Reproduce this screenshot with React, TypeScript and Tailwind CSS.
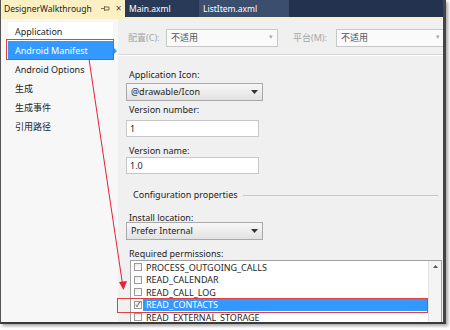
import React from 'react';

const FONT = '"Noto Sans", "Noto Sans CJK SC", sans-serif';

const NAV_ITEMS = ['Application', 'Android Manifest', 'Android Options', '生成', '生成事件', '引用路径'];

const PERMISSIONS = [
  { name: 'PROCESS_OUTGOING_CALLS', checked: false },
  { name: 'READ_CALENDAR', checked: false },
  { name: 'READ_CALL_LOG', checked: false },
  { name: 'READ_CONTACTS', checked: true },
  { name: 'READ_EXTERNAL_STORAGE', checked: false },
];

function Caret() {
  return (
    <svg width="7" height="4" viewBox="0 0 7 4" className="shrink-0">
      <path d="M0 0h7L3.5 4z" fill="#333" />
    </svg>
  );
}

function Select({ value, disabled, className }: { value: string; disabled?: boolean; className?: string }) {
  return (
    <div
      className={`flex items-center justify-between h-[18px] px-[4px] border ${
        disabled ? 'border-[#c8c8c8] bg-[#fafafa] text-[#555]' : 'border-[#a9a9a9] bg-[linear-gradient(#f7f7f7,#e2e2e2)] text-[#1e1e1e]'
      } ${className ?? ''}`}
    >
      <span>{value}</span>
      {disabled ? <span className="text-[#aaa] text-[7px]">▾</span> : <Caret />}
    </div>
  );
}

function TextInput({ value }: { value: string }) {
  return (
    <div className="flex items-center h-[17px] w-[133px] px-[3px] bg-white border border-[#c7c7c7] text-[#1e1e1e]">
      {value}
    </div>
  );
}

function Label({ children, className }: { children: React.ReactNode; className?: string }) {
  return <div className={`pl-[3px] text-[#1e1e1e] leading-[12px] h-[12px] ${className ?? ''}`}>{children}</div>;
}

export default function App() {
  return (
    <div className="relative w-[450px] h-[330px] bg-white overflow-hidden text-[9px]" style={{ fontFamily: FONT }}>
      <div className="flex flex-col w-[446px] h-[324px] bg-[#f0f0f0] border-l border-l-[#555] border-r-[3px] border-r-[#444] border-b-[2px] border-b-[#3a3a3a] shadow-[2px_2px_3px_rgba(0,0,0,0.35)] overflow-hidden">
        {/* document tabs */}
        <div className="flex h-[17px] bg-[#293a58] text-[8.5px] leading-[17px] shrink-0">
          <div className="flex items-center w-[124px] pl-[3px] bg-[#fbf0c3] text-[#1e1e1e]">
            <span>DesignerWalkthrough</span>
            <svg width="9" height="7" viewBox="0 0 9 7" className="ml-[9px]">
              <path d="M0 3.5h3M3.5 1v5M3.5 2h4.5v3h-4.5" stroke="#76704f" strokeWidth="1" fill="none" />
            </svg>
            <span className="ml-[6px] text-[#444] text-[10px]">×</span>
          </div>
          <div className="w-[74px] pl-[4px] text-white">Main.axml</div>
          <div className="w-[90px] pl-[4px] bg-[#3b4e6e] text-white">ListItem.axml</div>
          <div className="flex-1 bg-[#22324f]" />
        </div>
        <div className="h-[2px] bg-[#fbf0c3] shrink-0" />

        <div className="flex flex-1 min-h-0">
          {/* sidebar */}
          <div className="w-[117px] shrink-0 bg-[#f7f7f7] pt-[3px] flex flex-col text-[#1e1e1e] text-[9px]">
            {NAV_ITEMS.map((item, i) => (
              <div
                key={item}
                className={`relative flex items-center h-[19px] ml-[7px] w-[105px] pl-[7px] ${
                  i === 1 ? 'bg-[#3399ff] text-white' : i === 0 ? 'bg-white' : ''
                }`}
              >
                {item}
                {i === 1 && (
                  <span className="absolute right-[-4px] top-[6px] w-0 h-0 border-y-[4px] border-y-transparent border-l-[4px] border-l-[#3399ff]" />
                )}
              </div>
            ))}
          </div>

          {/* content */}
          <div className="flex-1 min-w-0 flex flex-col">
            <div className="flex items-center h-[36px] pl-[10px] pt-[2px] text-[#a6a6a6] border-b border-b-[#d6d6d6] shrink-0">
              <span className="w-[38px]">配置(C):</span>
              <Select value="不适用" disabled className="w-[112px]" />
              <span className="ml-[15px] w-[43px]">平台(M):</span>
              <Select value="不适用" disabled className="flex-1 mr-[-2px]" />
            </div>
            <div className="h-[1px] bg-white shrink-0" />

            <div className="flex flex-col pl-[8px] pt-[13px]">
              <Label>Application Icon:</Label>
              <Select value="@drawable/Icon" className="w-[137px] mt-[2px]" />
              <Label className="mt-[3px]">Version number:</Label>
              <div className="mt-[4px]"><TextInput value="1" /></div>
              <Label className="mt-[8px]">Version name:</Label>
              <TextInput value="1.0" />

              <div className="flex items-center h-[12px] mt-[15px] pl-[7px] pr-[5px]">
                <span className="text-[#1e1e1e]">Configuration properties</span>
                <div className="flex-1 ml-[5px] h-[1px] bg-[#c8c8c8]" />
              </div>

              <Label className="mt-[11px]">Install location:</Label>
              <Select value="Prefer Internal" className="w-[137px] mt-[-2px]" />
              <Label className="mt-[8px]">Required permissions:</Label>

              <div className="relative flex mt-[0px] ml-[4px] w-[312px] h-[70px] bg-white border border-[#a0a0a0] pl-[3px]">
                <div className="flex-1 flex flex-col">
                  {PERMISSIONS.map((p) => (
                    <div key={p.name} className="flex items-center h-[12.5px] shrink-0">
                      <span className="flex items-center justify-center w-[8px] h-[8px] border border-[#9a9a9a] bg-[linear-gradient(#eee,#fff)] text-[7px] leading-none text-[#222]">
                        {p.checked ? '✓' : ''}
                      </span>
                      <span
                        className={`flex items-center h-full flex-1 pl-[3px] ml-[1px] ${
                          p.checked ? 'bg-[#3399ff] text-white' : 'text-[#1e1e1e]'
                        }`}
                      >
                        {p.name}
                      </span>
                    </div>
                  ))}
                </div>
                <div className="w-[13px] ml-[1px] bg-[#f4f4f4] border-l border-l-[#e4e4e4] flex justify-center pt-[4px]">
                  <svg width="5" height="3" viewBox="0 0 5 3">
                    <path d="M0 3L2.5 0L5 3z" fill="#555" />
                  </svg>
                </div>
              </div>
            </div>
          </div>
        </div>
      </div>

      {/* annotations */}
      <div className="absolute left-[6px] top-[39px] w-[108px] h-[21px] border border-[#e04040]" />
      <div className="absolute left-[117px] top-[298px] w-[311px] h-[15px] border border-[#e04040]" />
      <svg className="absolute left-0 top-0" width="450" height="330" viewBox="0 0 450 330">
        <line x1="89" y1="59" x2="122.5" y2="284" stroke="#e8203a" strokeWidth="1" />
        <path d="M119 282L127 281L123.5 290z" fill="#e8203a" />
      </svg>
    </div>
  );
}
